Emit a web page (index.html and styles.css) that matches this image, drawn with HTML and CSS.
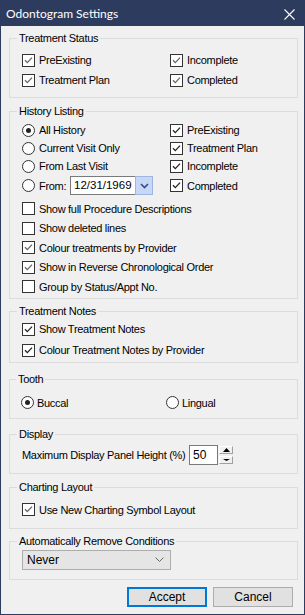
FILE: index.html
```html
<!DOCTYPE html>
<html>
<head>
<meta charset="utf-8">
<link rel="stylesheet" href="styles.css">
</head>
<body>
<div class="window">
  <div class="titlebar">
    <span class="title">Odontogram Settings</span>
    <svg class="close" width="11" height="11" viewBox="0 0 11 11"><path d="M0.5 0.5 L10.5 10.5 M10.5 0.5 L0.5 10.5" stroke="#fff" stroke-width="1.1" fill="none"/></svg>
  </div>
  <div class="client">
    <fieldset class="group g-status">
      <legend>Treatment Status</legend>
      <div class="grid2">
        <div class="opt"><span class="ind cb"><svg viewBox="0 0 11 11"><path class="ck gray" d="M2 5.2 L4.3 7.6 L9 2.6"/></svg></span>PreExisting</div>
        <div class="opt"><span class="ind cb"><svg viewBox="0 0 11 11"><path class="ck gray" d="M2 5.2 L4.3 7.6 L9 2.6"/></svg></span>Incomplete</div>
        <div class="opt"><span class="ind cb"><svg viewBox="0 0 11 11"><path class="ck gray" d="M2 5.2 L4.3 7.6 L9 2.6"/></svg></span>Treatment Plan</div>
        <div class="opt"><span class="ind cb"><svg viewBox="0 0 11 11"><path class="ck gray" d="M2 5.2 L4.3 7.6 L9 2.6"/></svg></span>Completed</div>
      </div>
    </fieldset>

    <fieldset class="group g-history">
      <legend>History Listing</legend>
      <div class="hgrid">
        <div class="opt"><span class="ind rb on"></span>All History</div>
        <div class="opt"><span class="ind cb"><svg viewBox="0 0 11 11"><path class="ck" d="M2 5.2 L4.3 7.6 L9 2.6"/></svg></span>PreExisting</div>
        <div class="opt"><span class="ind rb"></span>Current Visit Only</div>
        <div class="opt"><span class="ind cb"><svg viewBox="0 0 11 11"><path class="ck" d="M2 5.2 L4.3 7.6 L9 2.6"/></svg></span>Treatment Plan</div>
        <div class="opt"><span class="ind rb"></span>From Last Visit</div>
        <div class="opt"><span class="ind cb"><svg viewBox="0 0 11 11"><path class="ck" d="M2 5.2 L4.3 7.6 L9 2.6"/></svg></span>Incomplete</div>
        <div class="opt"><span class="ind rb"></span><span class="from-lbl">From:</span>
          <div class="date"><span class="date-val">12/31/1969</span><span class="date-btn"><svg width="9" height="6" viewBox="0 0 9 6"><path d="M1 1 L4.5 4.5 L8 1" stroke="#2f4f8f" stroke-width="1.6" fill="none"/></svg></span></div>
        </div>
        <div class="opt"><span class="ind cb"><svg viewBox="0 0 11 11"><path class="ck" d="M2 5.2 L4.3 7.6 L9 2.6"/></svg></span>Completed</div>
      </div>
      <div class="list">
        <div class="opt r"><span class="ind cb"></span>Show full Procedure Descriptions</div>
        <div class="opt r"><span class="ind cb"></span>Show deleted lines</div>
        <div class="opt r"><span class="ind cb"><svg viewBox="0 0 11 11"><path class="ck gray" d="M2 5.2 L4.3 7.6 L9 2.6"/></svg></span>Colour treatments by Provider</div>
        <div class="opt r"><span class="ind cb"><svg viewBox="0 0 11 11"><path class="ck gray" d="M2 5.2 L4.3 7.6 L9 2.6"/></svg></span>Show in Reverse Chronological Order</div>
        <div class="opt r"><span class="ind cb"></span>Group by Status/Appt No.</div>
      </div>
    </fieldset>

    <fieldset class="group g-notes">
      <legend>Treatment Notes</legend>
      <div class="opt r21"><span class="ind cb"><svg viewBox="0 0 11 11"><path class="ck" d="M2 5.2 L4.3 7.6 L9 2.6"/></svg></span>Show Treatment Notes</div>
      <div class="opt r21"><span class="ind cb"><svg viewBox="0 0 11 11"><path class="ck" d="M2 5.2 L4.3 7.6 L9 2.6"/></svg></span>Colour Treatment Notes by Provider</div>
    </fieldset>

    <fieldset class="group g-tooth">
      <legend>Tooth</legend>
      <div class="tgrid">
        <div class="opt"><span class="ind rb on"></span>Buccal</div>
        <div class="opt"><span class="ind rb"></span>Lingual</div>
      </div>
    </fieldset>

    <fieldset class="group g-display">
      <legend>Display</legend>
      <div class="opt spinrow">
        <span class="spin-lbl">Maximum Display Panel Height (%)</span>
        <span class="spin-val">50</span>
        <span class="spin-btns">
          <span class="sb"><svg width="7" height="4" viewBox="0 0 7 4"><path d="M0 4 L3.5 0 L7 4 Z" fill="#000"/></svg></span>
          <span class="sb"><svg width="7" height="2" viewBox="0 0 7 2"><path d="M0 0 L7 0 L3.5 2 Z" fill="#000"/></svg></span>
        </span>
      </div>
    </fieldset>

    <fieldset class="group g-chart">
      <legend>Charting Layout</legend>
      <div class="opt"><span class="ind cb"><svg viewBox="0 0 11 11"><path class="ck gray" d="M2 5.2 L4.3 7.6 L9 2.6"/></svg></span>Use New Charting Symbol Layout</div>
    </fieldset>

    <fieldset class="group g-auto">
      <legend>Automatically Remove Conditions</legend>
      <div class="combo"><span>Never</span><svg width="9" height="5" viewBox="0 0 9 5"><path d="M0.5 0.5 L4.5 4.5 L8.5 0.5" stroke="#666" stroke-width="1" fill="none"/></svg></div>
    </fieldset>

    <div class="buttons">
      <button class="btn default">Accept</button>
      <button class="btn">Cancel</button>
    </div>
  </div>
</div>
</body>
</html>
```

FILE: styles.css
```css
* { box-sizing: border-box; }
html, body { margin: 0; padding: 0; }
body {
  width: 305px;
  height: 615px;
  overflow: hidden;
  font-family: "Liberation Sans", Arial, sans-serif;
  font-size: 11px;
  letter-spacing: -0.3px;
  color: #000;
  background: #f0f0f0;
}
.window {
  width: 305px;
  height: 615px;
  border: 1px solid #2d3b5e;
  background: #f0f0f0;
  display: flex;
  flex-direction: column;
}
.titlebar {
  height: 25px;
  flex: none;
  background: #2d3b5e;
  color: #fff;
  display: flex;
  align-items: center;
  justify-content: space-between;
  padding: 0 9px 0 5px;
  font-family: Lato, "Noto Sans", sans-serif;
  font-size: 12px;
  letter-spacing: 0;
}
.close { display: block; margin-top: 1px; }
.client {
  padding: 6px 6px 0 8px;
  display: flex;
  flex-direction: column;
}
.group {
  margin: 0;
  border: 1px solid #dcdcdc;
  padding: 0 6px 0 12px;
  min-width: 0;
}
legend {
  padding: 0 2px;
  margin-left: -5px;
  line-height: 13px;
  height: 13px;
}
.opt {
  display: flex;
  align-items: center;
  height: 20px;
  white-space: nowrap;
}
.ind {
  width: 13px;
  height: 13px;
  margin-right: 4px;
  flex: none;
  background: #fff;
  border: 1px solid #333;
}
.cb { display: flex; }
.cb svg { width: 11px; height: 11px; display: block; }
.ck { fill: none; stroke: #222; stroke-width: 1.3; }
.ck.gray { stroke: #666; }
.rb { border-radius: 50%; position: relative; }
.rb.on::after {
  content: "";
  position: absolute;
  left: 3px; top: 3px;
  width: 5px; height: 5px;
  border-radius: 50%;
  background: #222;
}

/* Treatment status */
.g-status { padding-top: 5px; padding-bottom: 7px; }
.grid2 { display: grid; grid-template-columns: 148px auto; }

/* History */
.g-history { margin-top: 7px; padding-top: 3px; padding-bottom: 1px; }
.hgrid {
  display: grid;
  grid-template-columns: 148px auto;
  grid-template-rows: 18px 18px 18px 21px;
}
.hgrid .opt { height: auto; }
.list { margin-top: 3px; }
.opt.r { height: 19.5px; }
.from-lbl { width: 31px; }
.date { display: flex; height: 19px; }
.date-val {
  width: 65px;
  height: 19px;
  background: #fff;
  border: 1px solid #7a7a7a;
  border-right: none;
  padding-left: 3px;
  line-height: 17px;
  font-size: 11.5px;
  letter-spacing: 0;
}
.date-btn {
  width: 18px;
  height: 19px;
  background: #c8d7f5;
  border: 1px solid #9fb5e4;
  display: flex;
  align-items: center;
  justify-content: center;
}

/* Notes */
.g-notes { margin-top: 6px; padding-top: 1px; padding-bottom: 1px; }
.opt.r21 { height: 21px; }

/* Tooth */
.g-tooth { margin-top: 10px; padding-top: 7px; padding-bottom: 5px; padding-left: 11px; }
.tgrid { display: grid; grid-template-columns: 145px auto; }
.g-tooth .ind { margin-right: 3px; }

/* Display */
.g-display { margin-top: 9px; padding-top: 4px; padding-bottom: 8px; }
.spin-lbl { width: 167px; }
.spin-val {
  width: 29px;
  height: 20px;
  background: #fff;
  border: 1px solid #7a7a7a;
  padding-left: 3px;
  line-height: 18px;
  font-size: 12px;
  letter-spacing: 0;
}
.spin-btns {
  width: 14px;
  height: 20px;
  margin-left: 1px;
  display: flex;
  flex-direction: column;
  gap: 2px;
  padding: 1px 0;
}
.sb {
  flex: 1;
  display: flex;
  align-items: center;
  justify-content: center;
  background: #f0f0f0;
  border-top: 1px solid #fff;
  border-left: 1px solid #fff;
  border-bottom: 1px solid #a0a0a0;
  border-right: 1px solid #a0a0a0;
}

/* Charting */
.g-chart { margin-top: 7px; padding-top: 6px; padding-bottom: 8px; }

/* Auto remove */
.g-auto { margin-top: 6px; padding-top: 2px; padding-bottom: 9px; }
.combo {
  width: 149px;
  height: 20px;
  background: #e5e5e5;
  border: 1px solid #adadad;
  display: flex;
  align-items: center;
  justify-content: space-between;
  padding: 0 6px 0 4px;
  font-size: 12px;
  letter-spacing: 0;
}

/* Buttons */
.buttons {
  display: flex;
  justify-content: flex-end;
  gap: 6px;
  margin-top: 7px;
  padding-right: 5px;
}
.btn {
  width: 80px;
  height: 20px;
  background: #e1e1e1;
  border: 1px solid #adadad;
  font-family: "Liberation Sans", Arial, sans-serif;
  font-size: 12px;
  color: #000;
  padding: 0;
  margin: 0;
}
.btn.default { border: 2px solid #0078d7; }
```
